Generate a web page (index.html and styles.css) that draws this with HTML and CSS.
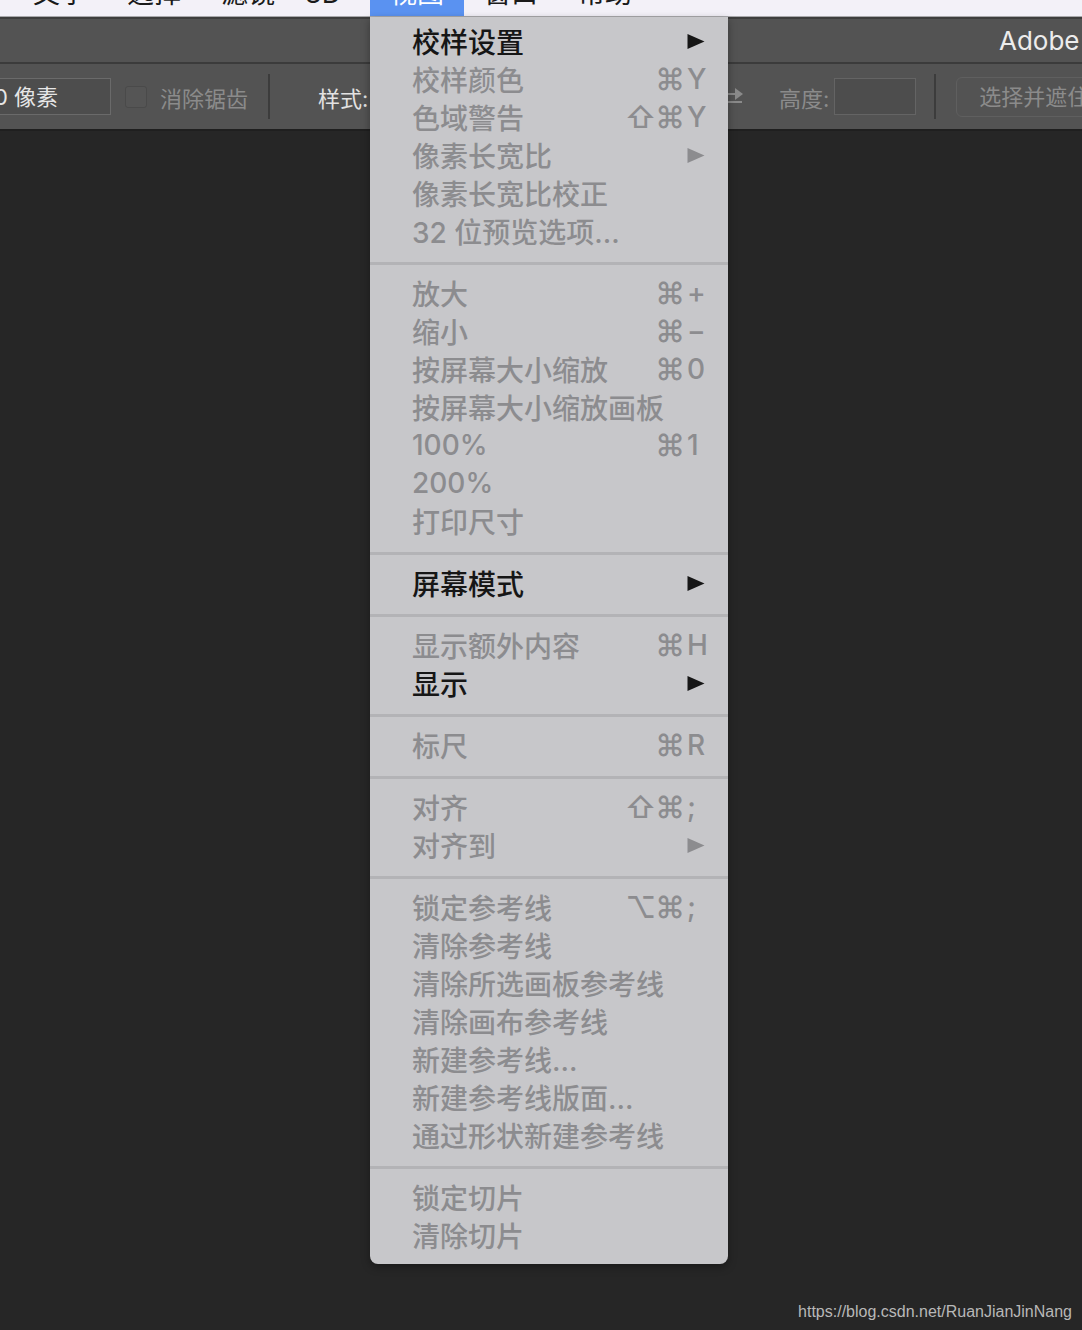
FILE: index.html
```html
<!DOCTYPE html>
<html lang="zh-CN">
<head>
    <meta charset="UTF-8">
    <meta name="viewport" content="width=device-width, initial-scale=1.0">
    <title>Photoshop 视图菜单</title>
    <link rel="stylesheet" href="styles.css">
</head>
<body>
    <div class="menubar">
        <span class="menubar-item">文字</span>
        <span class="menubar-item">选择</span>
        <span class="menubar-item">滤镜</span>
        <span class="menubar-item menubar-item-3d">3D</span>
        <span class="menubar-item active">视图</span>
        <span class="menubar-item">窗口</span>
        <span class="menubar-item">帮助</span>
    </div>

    <div class="titlebar">
        <span class="app-title">Adobe Photoshop CC 2019</span>
    </div>

    <div class="toolbar">
        <div class="field field-feather">0 像素</div>
        <span class="checkbox"></span>
        <span class="tool-label dim label-aa">消除锯齿</span>
        <span class="tool-divider divider-first"></span>
        <div class="style-group">
            <span class="tool-label">样式:</span>
            <div class="field field-select">正常</div>
            <span class="tool-label dim">宽度:</span>
            <div class="field field-size"></div>
        </div>
        <svg class="swap-icon" viewBox="0 0 24 24" width="24" height="24">
            <path d="M2 9 H16" stroke="#8a8a8a" stroke-width="2" fill="none"/>
            <path d="M15 3 L23 9 L15 15 Z" fill="#8a8a8a"/>
            <path d="M8 17 H22" stroke="#8a8a8a" stroke-width="2" fill="none"/>
        </svg>
        <span class="tool-label dim label-height">高度:</span>
        <div class="field field-size field-height"></div>
        <span class="tool-divider divider-second"></span>
        <div class="tool-button">选择并遮住...</div>
    </div>

    <div class="canvas">
        <span class="watermark">https://blog.csdn.net/RuanJianJinNang</span>
    </div>

    <div class="menu">
        <div class="menu-item"><span class="menu-label">校样设置</span><span class="shortcut"><span class="key"><svg class="arrow" viewBox="0 0 17 15"><path d="M0 0 L17 7.5 L0 15 Z"/></svg></span></span></div>
        <div class="menu-item disabled"><span class="menu-label">校样颜色</span><span class="shortcut"><span class="mods">⌘</span><span class="key">Y</span></span></div>
        <div class="menu-item disabled"><span class="menu-label">色域警告</span><span class="shortcut"><span class="mods">⇧⌘</span><span class="key">Y</span></span></div>
        <div class="menu-item disabled"><span class="menu-label">像素长宽比</span><span class="shortcut"><span class="key"><svg class="arrow" viewBox="0 0 17 15"><path d="M0 0 L17 7.5 L0 15 Z"/></svg></span></span></div>
        <div class="menu-item disabled"><span class="menu-label">像素长宽比校正</span></div>
        <div class="menu-item disabled"><span class="menu-label">32 位预览选项...</span></div>
        <div class="menu-sep"></div>
        <div class="menu-item disabled"><span class="menu-label">放大</span><span class="shortcut"><span class="mods">⌘</span><span class="key">+</span></span></div>
        <div class="menu-item disabled"><span class="menu-label">缩小</span><span class="shortcut"><span class="mods">⌘</span><span class="key">−</span></span></div>
        <div class="menu-item disabled"><span class="menu-label">按屏幕大小缩放</span><span class="shortcut"><span class="mods">⌘</span><span class="key">0</span></span></div>
        <div class="menu-item disabled"><span class="menu-label">按屏幕大小缩放画板</span></div>
        <div class="menu-item disabled"><span class="menu-label">100%</span><span class="shortcut"><span class="mods">⌘</span><span class="key">1</span></span></div>
        <div class="menu-item disabled"><span class="menu-label">200%</span></div>
        <div class="menu-item disabled"><span class="menu-label">打印尺寸</span></div>
        <div class="menu-sep"></div>
        <div class="menu-item"><span class="menu-label">屏幕模式</span><span class="shortcut"><span class="key"><svg class="arrow" viewBox="0 0 17 15"><path d="M0 0 L17 7.5 L0 15 Z"/></svg></span></span></div>
        <div class="menu-sep"></div>
        <div class="menu-item disabled"><span class="menu-label">显示额外内容</span><span class="shortcut"><span class="mods">⌘</span><span class="key">H</span></span></div>
        <div class="menu-item"><span class="menu-label">显示</span><span class="shortcut"><span class="key"><svg class="arrow" viewBox="0 0 17 15"><path d="M0 0 L17 7.5 L0 15 Z"/></svg></span></span></div>
        <div class="menu-sep"></div>
        <div class="menu-item disabled"><span class="menu-label">标尺</span><span class="shortcut"><span class="mods">⌘</span><span class="key">R</span></span></div>
        <div class="menu-sep"></div>
        <div class="menu-item disabled"><span class="menu-label">对齐</span><span class="shortcut"><span class="mods">⇧⌘</span><span class="key">;</span></span></div>
        <div class="menu-item disabled"><span class="menu-label">对齐到</span><span class="shortcut"><span class="key"><svg class="arrow" viewBox="0 0 17 15"><path d="M0 0 L17 7.5 L0 15 Z"/></svg></span></span></div>
        <div class="menu-sep"></div>
        <div class="menu-item disabled"><span class="menu-label">锁定参考线</span><span class="shortcut"><span class="mods">⌥⌘</span><span class="key">;</span></span></div>
        <div class="menu-item disabled"><span class="menu-label">清除参考线</span></div>
        <div class="menu-item disabled"><span class="menu-label">清除所选画板参考线</span></div>
        <div class="menu-item disabled"><span class="menu-label">清除画布参考线</span></div>
        <div class="menu-item disabled"><span class="menu-label">新建参考线...</span></div>
        <div class="menu-item disabled"><span class="menu-label">新建参考线版面...</span></div>
        <div class="menu-item disabled"><span class="menu-label">通过形状新建参考线</span></div>
        <div class="menu-sep"></div>
        <div class="menu-item disabled"><span class="menu-label">锁定切片</span></div>
        <div class="menu-item disabled"><span class="menu-label">清除切片</span></div>
    </div>
</body>
</html>
```

FILE: styles.css
```css
body, html {
    margin: 0;
    padding: 0;
    height: 100%;
    overflow: hidden;
    background-color: #262626;
    font-family: "Inter", "Noto Sans CJK SC", sans-serif;
}
body {
    display: flex;
    flex-direction: column;
    position: relative;
}

/* mac menu bar, only the bottom of it is on screen */
.menubar {
    height: 16px;
    flex-shrink: 0;
    display: flex;
    overflow: hidden;
    padding-left: 13px;
    background-color: #f3f1f8;
    border-bottom: 1px solid #a9a9ac;
}
.menubar-item {
    margin-top: -20px;
    padding: 0 20px 9px;
    font-size: 27px;
    line-height: 27px;
    color: #1a1a1a;
    white-space: nowrap;
}
.menubar-item-3d {
    box-sizing: border-box;
    width: 75px;
    padding: 0 0 9px 10px;
}
.menubar-item.active {
    background-color: #5a92f1;
    color: #fff;
}

.titlebar {
    height: 43px;
    flex-shrink: 0;
    display: flex;
    align-items: center;
    overflow: hidden;
    background-color: #535353;
    border-top: 2px solid #3e3e3e;
    border-bottom: 2px solid #3b3b3b;
}
.app-title {
    margin-left: 999px;
    font-size: 26px;
    color: #ececec;
    white-space: nowrap;
}

.toolbar {
    height: 65px;
    flex-shrink: 0;
    display: flex;
    align-items: center;
    overflow: hidden;
    background-color: #535353;
    border-bottom: 2px solid #1f1f1f;
}
.toolbar > * {
    flex-shrink: 0;
}
.tool-label {
    font-size: 22px;
    color: #e2e2e2;
    white-space: nowrap;
}
.tool-label.dim {
    color: #8b8b8b;
}
.field {
    box-sizing: border-box;
    height: 37px;
    border: 1px solid #6a6a6a;
    background-color: #4d4d4d;
    font-size: 22px;
    line-height: 37px;
    color: #e6e6e6;
    white-space: nowrap;
}
.field-feather {
    margin-left: -20px;
    width: 131px;
    padding-left: 13px;
}
.checkbox {
    box-sizing: border-box;
    width: 22px;
    height: 22px;
    margin-left: 14px;
    border: 1px solid #4a4a4a;
    border-radius: 3px;
    background-color: #555;
}
.label-aa {
    margin-left: 13px;
}
.tool-divider {
    width: 2px;
    height: 45px;
    background-color: #3c3c3c;
}
.divider-first {
    margin-left: 20px;
}
.style-group {
    width: 402px;
    margin-left: 48px;
    display: flex;
    align-items: center;
    gap: 8px;
}
.field-select {
    width: 110px;
    padding-left: 10px;
}
.field-size {
    width: 82px;
    border-color: #646464;
}
.swap-icon {
    display: block;
}
.label-height {
    margin-left: 35px;
}
.field-height {
    margin-left: 5px;
}
.divider-second {
    margin-left: 18px;
}
.tool-button {
    margin-left: 20px;
    height: 40px;
    box-sizing: border-box;
    padding: 0 22px;
    border: 1px solid #5f5f5f;
    border-radius: 6px;
    font-size: 22px;
    line-height: 38px;
    color: #8b8b8b;
    white-space: nowrap;
}

.canvas {
    flex: 1;
    display: flex;
    justify-content: flex-end;
    align-items: flex-end;
    padding: 0 10px 9px 0;
}
.watermark {
    font-family: "Liberation Sans", Arial, sans-serif;
    font-size: 16px;
    color: #b8b8b8;
}

/* the open 视图 menu */
.menu {
    position: absolute;
    top: 17px;
    left: 370px;
    width: 358px;
    padding: 5px 0 10px;
    background-color: #c7c7ca;
    border-radius: 0 0 8px 8px;
    box-shadow: 0 3px 8px rgba(0, 0, 0, 0.35);
}
.menu-item {
    height: 38px;
    display: flex;
    align-items: center;
    padding: 0 16px 0 42px;
    font-size: 28px;
    font-weight: 500;
    color: #161616;
}
.menu-item.disabled {
    color: #8c8c8f;
}
.menu-label {
    flex: 1;
    white-space: nowrap;
}
.shortcut {
    display: flex;
    align-items: center;
}
.mods {
    font-size: 30px;
    line-height: 1;
    letter-spacing: -1px;
    margin-right: 3px;
}
.key {
    width: 25px;
    display: flex;
    align-items: center;
}
.arrow {
    width: 18px;
    height: 15px;
    fill: currentColor;
}
.menu-sep {
    height: 3px;
    margin: 12px 0 9px;
    background-color: #b3b3b6;
}
```
